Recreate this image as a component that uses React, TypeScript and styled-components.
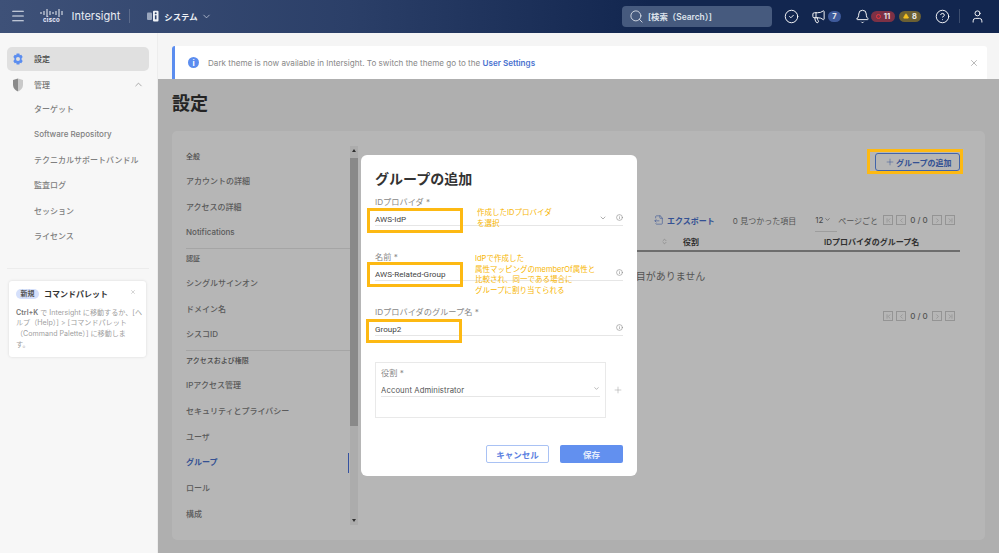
import React from "react";
import styled, { createGlobalStyle } from "styled-components";
import {
  Menu, ChevronDown, ChevronUp, Search, CircleCheck, Megaphone, Bell, CircleHelp, User, X, Plus,
  Info, ChevronFirst, ChevronLeft, ChevronRight, ChevronLast, ChevronsUpDown, FileOutput, TriangleAlert,
} from "lucide-react";

const Global = createGlobalStyle`
  html, body { margin: 0; padding: 0; height: 100%; overflow: hidden; }
  body { font-family: Inter, "Noto Sans CJK JP", sans-serif; color: #333; background: #f7f7f7; }
  #root { height: 100%; }
  * { box-sizing: border-box; }
`;

const Page = styled.div`display: flex; flex-direction: column; height: 553px; width: 999px; overflow: hidden;`;
const Header = styled.header`
  display: flex; align-items: center; height: 32.5px; flex: none; color: #fff;
  background: linear-gradient(90deg, #3e5178 0%, #2b3f68 35%, #12264f 65%, #12264f 100%);
  box-shadow: 0 1px 1px rgba(0,0,0,.2);
`;
const HeaderLeft = styled.div`display: flex; align-items: center; padding-left: 10px;`;
const Logo = styled.div`display: flex; flex-direction: column; align-items: center; margin-left: 14px; width: 23px; line-height: 1;`;
const LogoWord = styled.span`font-size: 6px; font-weight: 700; letter-spacing: .3px; color: #eef;`;
const Brand = styled.span`font-size: 11px; margin-left: 8.5px; color: #e9edf4;`;
const VDivider = styled.span`display: block; width: 1px; height: 14px; background: rgba(255,255,255,.18);`;
const BrandDivider = styled(VDivider)`margin: 0 17px 0 9px;`;
const SystemLabel = styled.span`font-size: 8.4px; font-weight: 700; margin: 0 3px 0 5px; color: #eef1f6;`;
const HeaderRight = styled.div`display: flex; align-items: center; margin-left: auto; padding-right: 14.5px;`;
const SearchBox = styled.div`
  display: flex; align-items: center; width: 150px; height: 21px; border-radius: 4px; background: #465a7e;
  padding-left: 7px; gap: 4px; font-size: 8.4px; font-weight: 600; color: #dfe4ec; margin-right: 11.5px;
`;
const Badge = styled.span<{ $bg: string; $width: number }>`
  display: inline-flex; align-items: center; justify-content: center; gap: 3px; height: 11px; border-radius: 6px;
  width: ${(p) => p.$width}px; font-size: 7.5px; font-weight: 700; background: ${(p) => p.$bg}; color: #e8e8e8;
`;
const Dot = styled.span`display: block; width: 5px; height: 5px; border-radius: 50%; border: 1.5px solid #e8383f;`;
const Body = styled.div`display: flex; flex: 1; min-height: 0;`;
const Sidebar = styled.aside`width: 158px; flex: none; background: #f7f7f7; padding: 14px 8px 0 7px; border-right: 1px solid #ededed;`;
const SideTop = styled.div<{ $active?: boolean }>`
  display: flex; align-items: center; height: 24px; border-radius: 5px; padding: 0 4px 0 5px; gap: 10px;
  font-size: 8px; font-weight: 500; color: ${(p) => (p.$active ? "#444" : "#777")};
  background: ${(p) => (p.$active ? "#e0e0e0" : "transparent")}; margin-bottom: ${(p) => (p.$active ? "2px" : "0")};
`;
const SideChevron = styled.span`display: flex; margin-left: auto; margin-right: 1px; color: #888;`;
const SideLink = styled.div`height: 25.55px; line-height: 25.55px; padding-left: 27px; font-size: 8px; font-weight: 500; color: #808080; white-space: nowrap;`;
const SideList = styled.div``;
const SideRule = styled.hr`border: 0; border-top: 1px solid #ececec; margin: 18px 0 12px;`;
const Card = styled.div`
  position: relative; margin-left: 2px; width: 137px; height: 76px; background: #fff; border-radius: 3px;
  box-shadow: 0 0 3px rgba(0,0,0,.13); padding: 8px 4px 8px 7px;
`;
const CardHead = styled.div`display: flex; align-items: center; gap: 5px; height: 10px; margin-bottom: 9px;`;
const NewPill = styled.span`background: #d5e0fb; color: #555; font-size: 7px; font-weight: 600; padding: 0 4.5px; border-radius: 5px; line-height: 10px;`;
const CardTitle = styled.span`font-size: 8px; font-weight: 700; color: #333;`;
const CardClose = styled.span`position: absolute; top: 8px; right: 10px; display: flex; color: #aaa;`;
const CardBody = styled.div`font-size: 7.1px; line-height: 10.6px; color: #a0a0a0; white-space: nowrap; strong { color: #777; font-weight: 600; }`;
const Main = styled.main`flex: 1; display: flex; flex-direction: column; min-width: 0; background: #f5f5f5;`;
const Banner = styled.div`
  display: flex; align-items: center; flex: none; height: 33px; margin: 13.5px 12px 0 14px; background: #fff; border-left: 3px solid #5b8def;
  border-radius: 3px 3px 0 0; padding: 0 8px 0 13px; font-size: 8.1px; color: #888;
`;
const InfoDisc = styled.span`display: flex; align-items: center; justify-content: center; width: 11px; height: 11px; border-radius: 50%; background: #5b8def; color: #fff; font-size: 8px; font-weight: 700; margin-right: 9px;`;
const BannerLink = styled.b`color: #4a72cf; font-weight: 600;`;
const BannerClose = styled.span`display: flex; margin-left: auto; color: #888;`;
const Content = styled.div`position: relative; flex: 1; min-height: 0; padding: 13px 14px 13px 14px; display: flex; flex-direction: column;`;
const Title = styled.h1`margin: 0; font-size: 18px; line-height: 24px; height: 39px; font-weight: 700; color: #333;`;
const Panel = styled.section`flex: 1; display: flex; min-height: 0; background: #fff; border-radius: 5px;`;
const NavArea = styled.div`width: 178px; flex: none; padding: 16px 0 0 14px;`;
const NavHeading = styled.div`height: 20px; line-height: 20px; font-size: 7px; font-weight: 500; color: #666; margin-bottom: 2px;`;
const NavItem = styled.div<{ $active?: boolean }>`
  position: relative; height: 25.7px; line-height: 25.7px; font-size: 8px; font-weight: ${(p) => (p.$active ? 700 : 500)}; color: ${(p) => (p.$active ? "#4a72cf" : "#808080")};
`;
const ActiveBar = styled.span`position: absolute; right: 1px; top: 2.5px; width: 1.5px; height: 20px; background: #4a72e0;`;
const NavRule = styled.hr`border: 0; border-top: 1px solid #e8e8e8; margin: 2px 0 0;`;
const Scrollbar = styled.div`width: 8px; flex: none; margin-top: 15px; height: 379px; background: #f1f1f1; display: flex; flex-direction: column;`;
const ScrollThumb = styled.div`height: 268px; margin-top: 9px; background: #c1c1c1;`;
const ScrollArrow = styled.div<{ $down?: boolean }>`
  width: 0; height: 0; border-left: 2px solid transparent; border-right: 2px solid transparent; margin: 0 auto;
  ${(p) => (p.$down ? "border-top: 3px solid #444; margin-top: auto; margin-bottom: 3px;" : "border-bottom: 3px solid #444; margin-top: 3px; margin-bottom: -3px;")}
`;
const Right = styled.div`flex: 1; min-width: 0; padding: 22px 25px 0 14px; display: flex; flex-direction: column;`;
const AddRow = styled.div`display: flex; justify-content: flex-end; height: 18px;`;
const AddWrap = styled.div`position: relative;`;
const AddButton = styled.div`
  display: flex; align-items: center; gap: 1px; width: 85px; height: 18px; padding-left: 9px; border: 1px solid #5b8def; border-radius: 3px;
  font-size: 8px; font-weight: 600; color: #4a72cf;
`;
const Highlight = styled.span`position: absolute; border: 3.5px solid #fdb913; z-index: 3; pointer-events: none;`;
const AddHighlight = styled(Highlight)`left: -8px; top: -4px; width: 95.5px; height: 24.5px;`;
const Toolbar = styled.div`display: flex; align-items: center; height: 16px; margin-top: 41px; padding-right: 5px; font-size: 8px; color: #777; white-space: nowrap;`;
const ExportLink = styled.span`display: flex; align-items: center; gap: 3px; font-weight: 600; color: #4a72cf; margin-right: 18px; margin-left: auto;`;
const Found = styled.span`margin-right: 19px;`;
const PageSize = styled.span`display: flex; align-items: center; gap: 1px; width: 22px; height: 16px; margin-right: 1px; border-bottom: 1px solid #ddd; margin-top: 8px; padding-bottom: 8px; color: #666; font-size: 8px;`;
const PerPage = styled.span`margin-right: 5px;`;
const Pager = styled.div`display: flex; align-items: center; gap: 3px; color: #777; font-size: 8px; font-weight: 500;`;
const PagerNumber = styled.span`width: 20px; text-align: center; white-space: nowrap;`;
const PagerButton = styled.span`display: flex; align-items: center; justify-content: center; width: 10px; height: 10px; border: 1px solid #d0d0d0; color: #bbb;`;
const TableHead = styled.div`display: grid; grid-template-columns: 1fr 141px 136px; align-items: center; height: 20px; margin-top: 4px; border-bottom: 2px solid #999; font-size: 8px; font-weight: 600; color: #444;`;
const NameCell = styled.span`display: flex; justify-content: space-between; padding-right: 15px; color: #aaa;`;
const Empty = styled.div`height: 48px; line-height: 48px; padding-right: 1px; text-align: center; font-size: 10px; color: #777;`;
const BottomPager = styled.div`display: flex; justify-content: flex-end; margin-top: 11px; padding-right: 5px;`;
const Overlay = styled.div`position: absolute; inset: 0; background: rgba(0,0,0,.285); z-index: 1;`;
const Modal = styled.div`
  position: absolute; left: 203px; top: 76px; width: 276px; height: 321px; z-index: 2; background: #fff; border-radius: 6px;
  padding: 14px; display: flex; flex-direction: column;
`;
const ModalTitle = styled.h2`margin: 0 0 9px; font-size: 14px; line-height: 19px; font-weight: 700; color: #333; flex: none;`;
const Field = styled.div`position: relative; height: 55px; flex: none;`;
const FieldLabel = styled.div`font-size: 8.2px; line-height: 11px; color: #888;`;
const FieldValue = styled.div`display: flex; align-items: center; height: 17px; margin-top: 1px; padding-top: 4px; border-bottom: 1px solid #e6e6e6; font-family: Roboto, "Noto Sans CJK JP", sans-serif; font-size: 8.1px; font-weight: 400; color: #444;`;
const FieldIcon = styled.span`display: flex; margin-left: auto; color: #888; align-items: center; gap: 9px; margin-top: -3px;`;
const RoleRow = styled.div`display: flex; align-items: center; flex: none;`;
const RoleBox = styled.div`width: 232px; height: 56px; border: 1px solid #e9e9e9; padding: 5px; `;
const RoleValue = styled(FieldValue)`font-family: Inter, "Noto Sans CJK JP", sans-serif; font-size: 7.7px; font-weight: 400; letter-spacing: .1px; color: #555;`;
const RolePlus = styled.span`display: flex; margin-left: 7px; color: #999; margin-top: -1px;`;
const Actions = styled.div`display: flex; justify-content: flex-end; gap: 11px; margin-top: 27px; flex: none;`;
const BaseButton = styled.button`
  width: 63px; height: 18px; padding: 0; border-radius: 2px; font: 700 8.5px Inter, "Noto Sans CJK JP", sans-serif;
`;
const Cancel = styled(BaseButton)`background: #fff; color: #5b80e0; border: 1px solid #a9c2f4;`;
const Save = styled(BaseButton)`background: #6290ef; color: #e6edfc; border: 0;`;
const Note = styled.div`position: absolute; z-index: 3; font-size: 7.5px; line-height: 10.6px; color: #f7b500; white-space: nowrap;`;
const NoteOne = styled(Note)`left: 116px; top: 53px;`;
const NoteTwo = styled(Note)`left: 114px; top: 99px;`;
const Box1 = styled(Highlight)`left: 6px; top: 53px; width: 95.5px; height: 24.5px;`;
const Box2 = styled(Highlight)`left: 6px; top: 107px; width: 95.5px; height: 24.5px;`;
const Box3 = styled(Highlight)`left: 5px; top: 164px; width: 95.5px; height: 24px;`;

const CiscoBars = () => (
  <svg width="23" height="8" viewBox="0 0 23 8" fill="none" stroke="#eef1f6" strokeWidth="1" aria-hidden>
    {[[1, 3, 5], [4, 2, 6], [7, 0, 8], [10, 2, 6], [13, 3, 5], [16, 2, 6], [19, 0, 8], [22, 2, 6]].map(([x, y1, y2]) => (
      <line key={x} x1={x} x2={x} y1={y1} y2={y2} />
    ))}
  </svg>
);
const SystemIcon = () => (
  <svg width="12" height="12" viewBox="0 0 12 12" aria-hidden>
    <rect x="0" y="2.5" width="5" height="7.5" rx="1" fill="#9aa6bd" />
    <rect x="6" y="0.8" width="5.5" height="10.6" rx="1" fill="#eef1f6" />
    <circle cx="8.7" cy="3.2" r="1" fill="#33466e" />
    <rect x="7.9" y="5.3" width="1.6" height="4" fill="#33466e" />
  </svg>
);
const ShieldIcon = () => (
  <svg width="12" height="14" viewBox="0 0 12 14" aria-hidden>
    <path d="M6 .5 L11 2 V7 C11 10 8.6 12.4 6 13.5 Z" fill="#c9c9c9" />
    <path d="M6 .5 L1 2 V7 C1 10 3.4 12.4 6 13.5 Z" fill="#8b8b8b" />
  </svg>
);
const GearIcon = () => (
  <svg width="12" height="12" viewBox="0 0 12 12" aria-hidden>
    <path d="M4.6.6h2.8l.4 1.6 1.5-.5 1.4 2.4L9.6 5.2v1.6l1.1 1.1-1.4 2.4-1.5-.5-.4 1.6H4.6l-.4-1.6-1.5.5L1.3 7.900l1.100-1.100V5.200L1.300 4.100l1.400-2.400 1.500.5z" fill="#5b8def" />
    <circle cx="6" cy="6" r="2" fill="#e0e0e0" />
  </svg>
);

const PagerView = () => (
  <Pager>
    <PagerButton><ChevronFirst size={7} /></PagerButton>
    <PagerButton><ChevronLeft size={7} /></PagerButton>
    <PagerNumber>0 / 0</PagerNumber>
    <PagerButton><ChevronRight size={7} /></PagerButton>
    <PagerButton><ChevronLast size={7} /></PagerButton>
  </Pager>
);

const sideLinks = ["ターゲット", "Software Repository", "テクニカルサポートバンドル", "監査ログ", "セッション", "ライセンス"];

export default function App() {
  return (
    <Page>
      <Global />
      <Header>
        <HeaderLeft>
          <Menu size={16} strokeWidth={1.6} color="#e8ecf3" />
          <Logo><CiscoBars /><LogoWord>cisco</LogoWord></Logo>
          <Brand>Intersight</Brand>
          <BrandDivider />
          <SystemIcon />
          <SystemLabel>システム</SystemLabel>
          <ChevronDown size={11} strokeWidth={1.5} color="#d8deea" />
        </HeaderLeft>
        <HeaderRight>
          <SearchBox><Search size={15} strokeWidth={1.4} />[検索（Search）]</SearchBox>
          <CircleCheck size={15} strokeWidth={1.5} style={{ marginRight: 12 }} />
          <Megaphone size={15} strokeWidth={1.5} style={{ marginRight: 2.5 }} />
          <Badge $bg="#3e5a9b" $width={13} style={{ marginRight: 13.5 }}>7</Badge>
          <Bell size={15} strokeWidth={1.5} style={{ marginRight: 1.5 }} />
          <Badge $bg="#7c3145" $width={24} style={{ marginRight: 4 }}><Dot />11</Badge>
          <Badge $bg="#6c6033" $width={22} style={{ marginRight: 13.5 }}><TriangleAlert size={6} fill="#f4c020" color="#f4c020" />8</Badge>
          <CircleHelp size={15} strokeWidth={1.5} style={{ marginRight: 9 }} />
          <VDivider style={{ marginRight: 10 }} />
          <User size={15} strokeWidth={1.5} />
        </HeaderRight>
      </Header>
      <Body>
        <Sidebar>
          <SideTop $active><GearIcon />設定</SideTop>
          <SideTop><ShieldIcon />管理<SideChevron><ChevronUp size={11} strokeWidth={1.5} /></SideChevron></SideTop>
          <SideList>{sideLinks.map((s) => <SideLink key={s}>{s}</SideLink>)}</SideList>
          <SideRule />
          <Card>
            <CardHead><NewPill>新規</NewPill><CardTitle>コマンドパレット</CardTitle></CardHead>
            <CardClose><X size={6} /></CardClose>
            <CardBody>
              <strong>Ctrl+K</strong> で Intersight に移動するか、[ヘ<br />
              ルプ（Help）] &gt; [コマンドパレット<br />
              （Command Palette）] に移動しま<br />
              す。
            </CardBody>
          </Card>
        </Sidebar>
        <Main>
          <Banner>
            <InfoDisc>i</InfoDisc>
            <span>Dark theme is now available in Intersight. To switch the theme go to the <BannerLink>User Settings</BannerLink></span>
            <BannerClose><X size={10} strokeWidth={1.4} /></BannerClose>
          </Banner>
          <Content>
            <Title>設定</Title>
            <Panel>
              <NavArea>
                <NavHeading>全般</NavHeading>
                <NavItem>アカウントの詳細</NavItem>
                <NavItem>アクセスの詳細</NavItem>
                <NavItem>Notifications</NavItem>
                <NavRule />
                <NavHeading>認証</NavHeading>
                <NavItem>シングルサインオン</NavItem>
                <NavItem>ドメイン名</NavItem>
                <NavItem>シスコID</NavItem>
                <NavRule />
                <NavHeading>アクセスおよび権限</NavHeading>
                <NavItem>IPアクセス管理</NavItem>
                <NavItem>セキュリティとプライバシー</NavItem>
                <NavItem>ユーザ</NavItem>
                <NavItem $active>グループ<ActiveBar /></NavItem>
                <NavItem>ロール</NavItem>
                <NavItem>構成</NavItem>
              </NavArea>
              <Scrollbar><ScrollArrow /><ScrollThumb /><ScrollArrow $down /></Scrollbar>
              <Right>
                <AddRow>
                  <AddWrap>
                    <AddButton><Plus size={10} strokeWidth={1.2} />グループの追加</AddButton>
                    <AddHighlight />
                  </AddWrap>
                </AddRow>
                <Toolbar>
                  <ExportLink><FileOutput size={10} strokeWidth={1.4} />エクスポート</ExportLink>
                  <Found>0 見つかった項目</Found>
                  <PageSize>12<ChevronDown size={7} /></PageSize>
                  <PerPage>ページごと</PerPage>
                  <PagerView />
                </Toolbar>
                <TableHead>
                  <NameCell><span /><ChevronsUpDown size={7} /></NameCell>
                  <span>役割</span>
                  <span>IDプロバイダのグループ名</span>
                </TableHead>
                <Empty>項目がありません</Empty>
                <BottomPager><PagerView /></BottomPager>
              </Right>
            </Panel>
            <Overlay />
            <Modal>
              <ModalTitle>グループの追加</ModalTitle>
              <Field>
                <FieldLabel>IDプロバイダ *</FieldLabel>
                <FieldValue>AWS-IdP<FieldIcon><ChevronDown size={8} /><Info size={7} /></FieldIcon></FieldValue>
              </Field>
              <Field>
                <FieldLabel>名前 *</FieldLabel>
                <FieldValue>AWS-Related-Group<FieldIcon><Info size={7} /></FieldIcon></FieldValue>
              </Field>
              <Field>
                <FieldLabel>IDプロバイダのグループ名 *</FieldLabel>
                <FieldValue>Group2<FieldIcon><Info size={7} /></FieldIcon></FieldValue>
              </Field>
              <RoleRow>
                <RoleBox>
                  <FieldLabel>役割 *</FieldLabel>
                  <RoleValue>Account Administrator<FieldIcon><ChevronDown size={7} /></FieldIcon></RoleValue>
                </RoleBox>
                <RolePlus><Plus size={10} strokeWidth={1.2} /></RolePlus>
              </RoleRow>
              <Actions><Cancel>キャンセル</Cancel><Save>保存</Save></Actions>
              <NoteOne>作成したIDプロバイダ<br />を選択</NoteOne>
              <NoteTwo>IdPで作成した<br />属性マッピングのmemberOf属性と<br />比較され、同一である場合に<br />グループに割り当てられる</NoteTwo>
              <Box1 /><Box2 /><Box3 />
            </Modal>
          </Content>
        </Main>
      </Body>
    </Page>
  );
}
